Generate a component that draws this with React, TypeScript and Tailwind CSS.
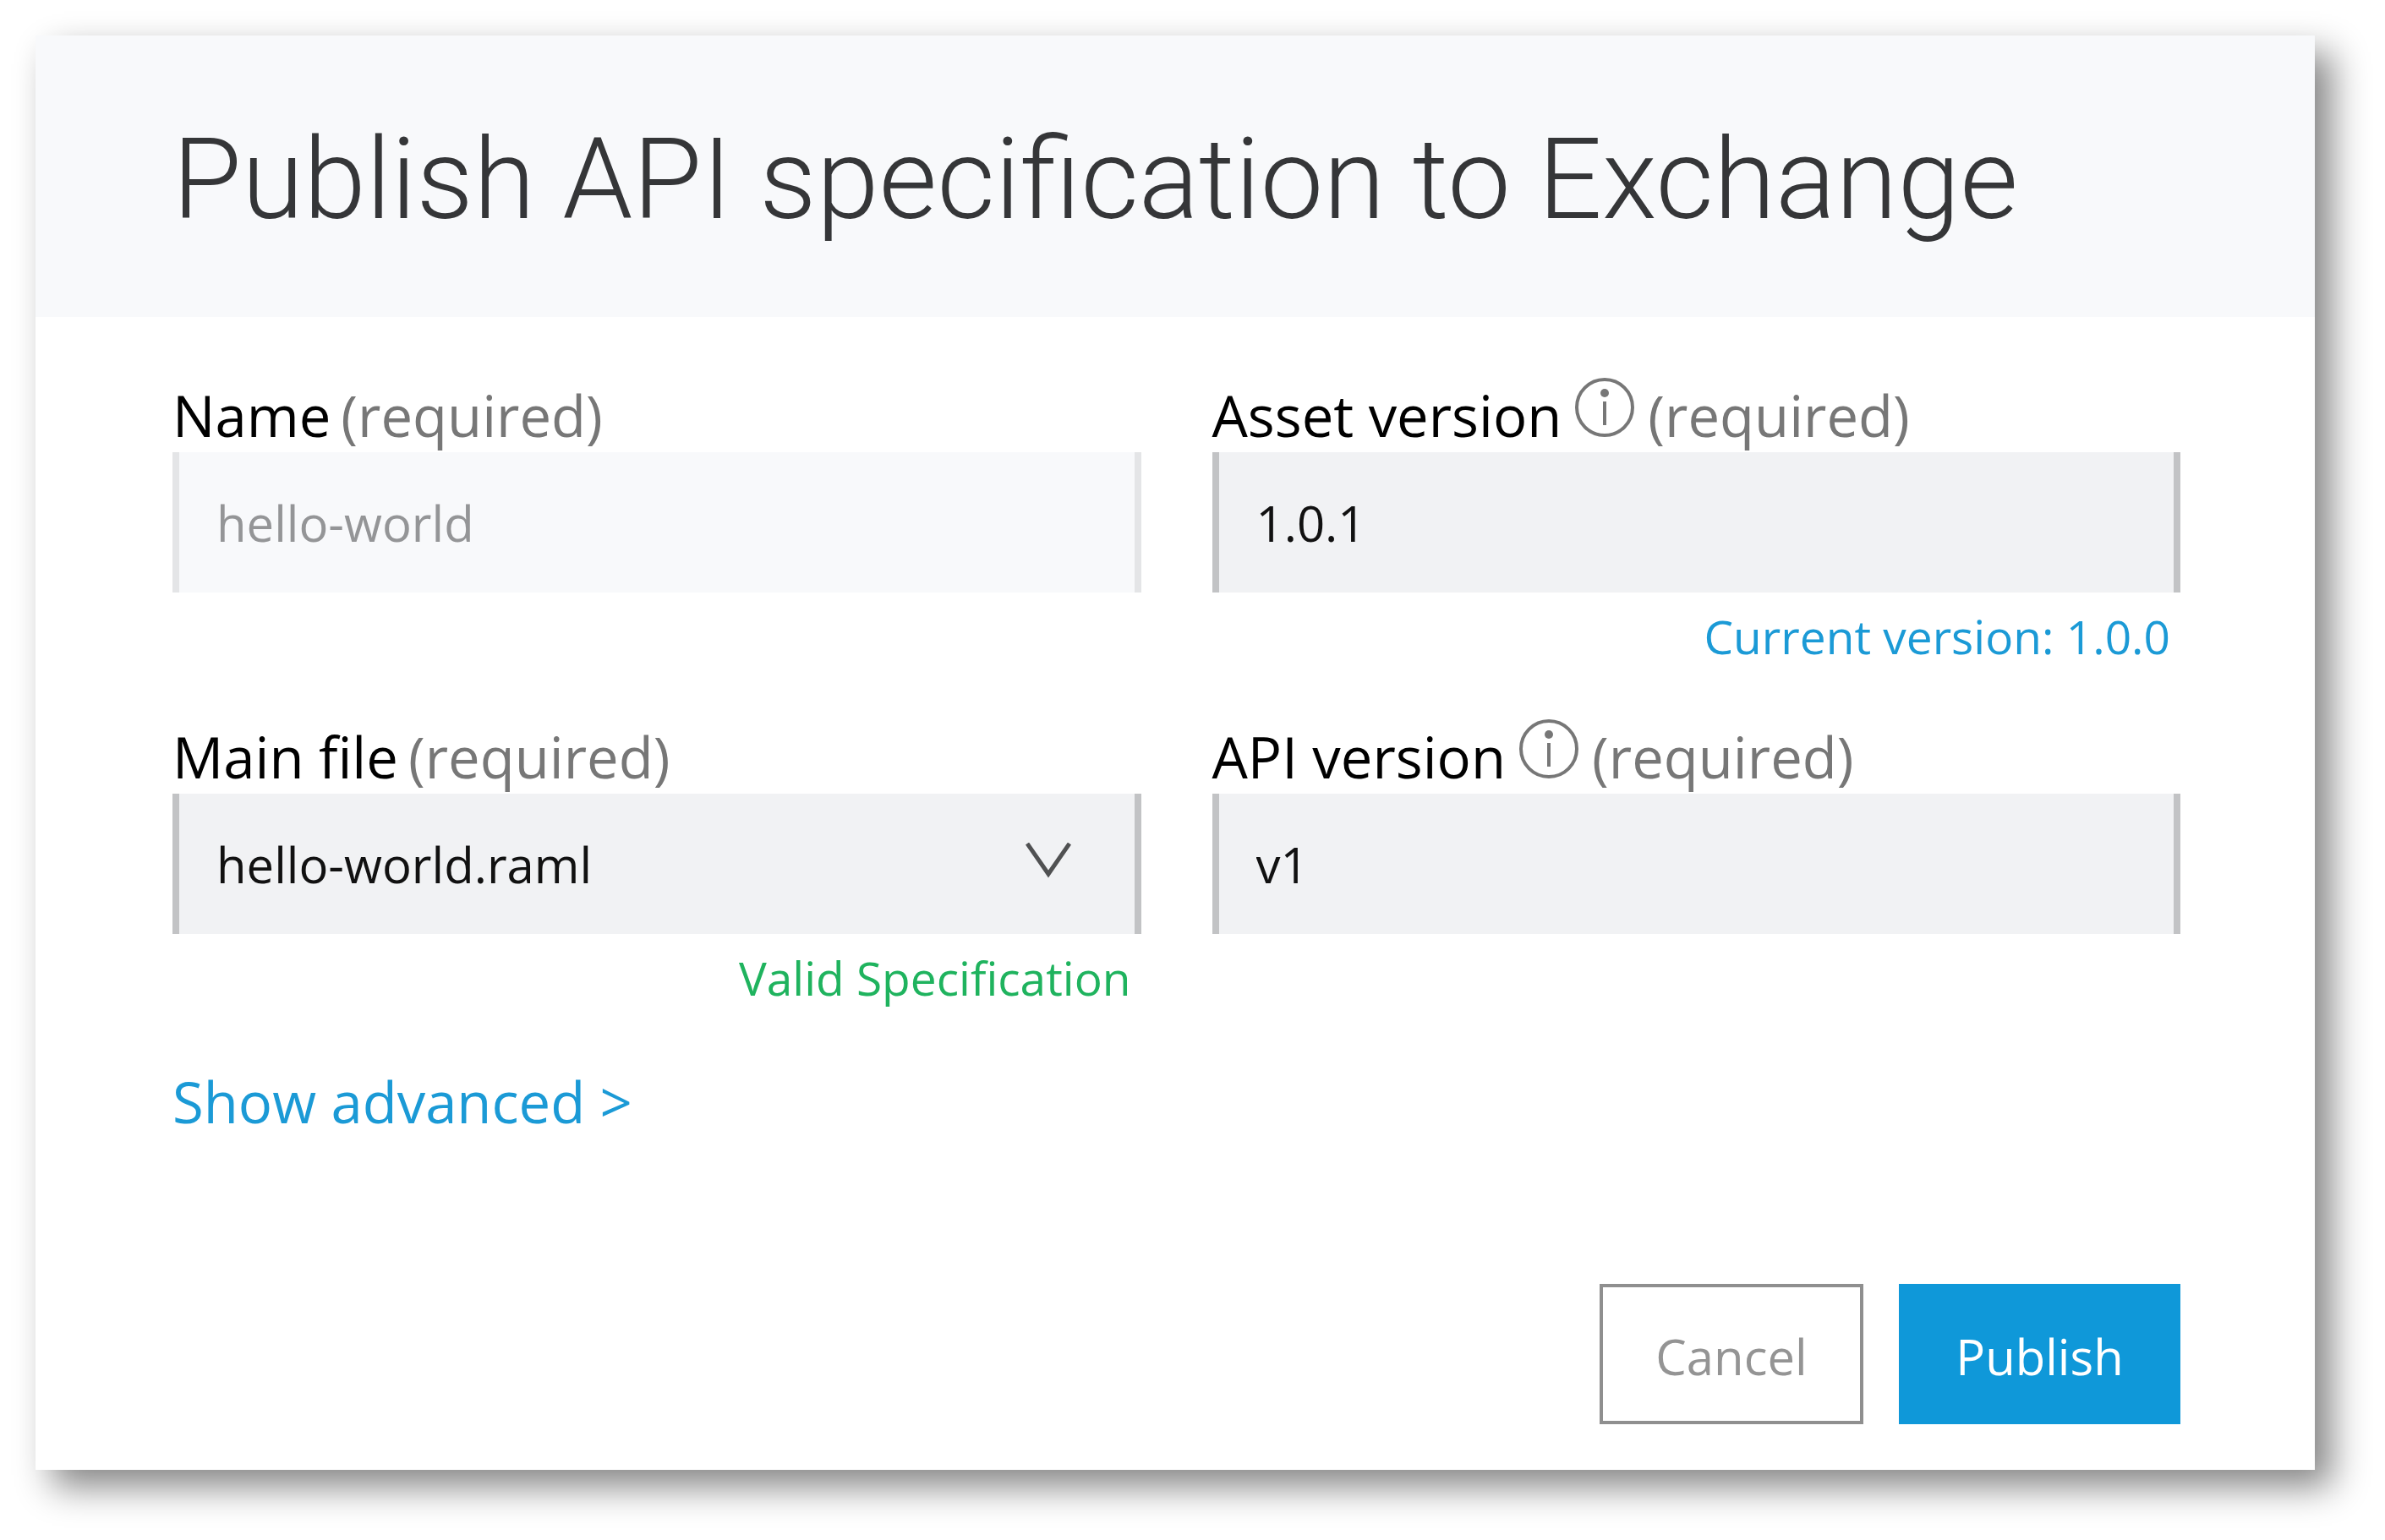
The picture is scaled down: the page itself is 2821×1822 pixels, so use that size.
import React from "react";

function InfoIcon() {
  return (
    <svg viewBox="0 0 70 70" role="img" aria-label="More information" className="mr-4 ml-4 size-[70px] shrink-0 text-[#777777]" fill="none" stroke="currentColor">
      <circle cx="35" cy="35" r="33" strokeWidth="4" />
      <circle cx="35" cy="18" r="5" fill="currentColor" stroke="none" />
      <path d="M35 28V56" strokeWidth="4" />
    </svg>
  );
}

function Chevron() {
  return (
    <svg viewBox="0 0 54 42" aria-hidden="true" className="pointer-events-none absolute top-[58px] right-[83px] h-[42px] w-[54px] text-[#505152]" fill="none" stroke="currentColor" strokeWidth="5">
      <path d="M2 1L27 37L52 1" />
    </svg>
  );
}

type FieldProps = {
  id: string;
  label: string;
  info?: boolean;
  note?: string;
  noteClass?: string;
  children: React.ReactNode;
};

function Field({ id, label, info, note, noteClass, children }: FieldProps) {
  return (
    <div className="flex min-w-0 flex-col">
      <label htmlFor={id} className="flex h-[88px] items-baseline text-[67px] leading-[88px] whitespace-nowrap text-black">
        <span>{label}</span>
        {info ? <InfoIcon /> : <span className="w-3" />}
        <span className="text-[#777777]">(required)</span>
      </label>
      {children}
      <p className={"h-[150px] pt-4 pr-3 text-right text-[55px] leading-[72px] " + (noteClass ?? "")}>{note}</p>
    </div>
  );
}

const control =
  "block h-[166px] w-full appearance-none rounded-none border-x-8 border-[#c2c3c5] bg-[#f1f2f4] px-11 text-[58px] text-[#111111] outline-none";

export default function App() {
  return (
    <main className="min-h-screen bg-white pt-[42px] pr-[83px] pb-[84px] pl-[42px] font-['Open_Sans',sans-serif]">
      <form className="bg-white shadow-[20px_20px_40px_rgba(0,0,0,0.48)]" onSubmit={(e) => e.preventDefault()}>
        <header className="flex h-[333px] items-center bg-[#f8f9fb] px-[162px] pt-2">
          <h1 className="font-['Roboto',sans-serif] text-[133px] leading-[160px] font-light whitespace-nowrap text-[#353638]">
            Publish API specification to Exchange
          </h1>
        </header>
        <div className="pt-[72px] pr-[159px] pb-[54px] pl-[162px]">
          <div className="grid grid-cols-2 gap-x-[84px]">
            <Field id="name" label="Name">
              <input id="name" disabled defaultValue="hello-world" className="block h-[166px] w-full rounded-none border-x-8 border-[#e4e5e7] bg-[#f8f9fb] px-11 text-[58px] text-[#949597]" />
            </Field>
            <Field id="asset-version" label="Asset version" info note="Current version: 1.0.0" noteClass="text-[#1b9ad6]">
              <input id="asset-version" defaultValue="1.0.1" className={control} />
            </Field>
            <Field id="main-file" label="Main file" note="Valid Specification" noteClass="text-[#1fb35e]">
              <div className="relative">
                <select id="main-file" className={control}>
                  <option>hello-world.raml</option>
                </select>
                <Chevron />
              </div>
            </Field>
            <Field id="api-version" label="API version" info>
              <input id="api-version" defaultValue="v1" className={control} />
            </Field>
          </div>
          <button type="button" className="mt-1 block text-[67px] leading-[88px] text-[#1b9ad6]">
            Show advanced &gt;
          </button>
          <div className="mt-[172px] flex justify-end gap-[42px]">
            <button type="button" className="h-[166px] w-[312px] border-4 border-[#8f8f8f] bg-white pt-1 text-[58px] text-[#949494]">
              Cancel
            </button>
            <button type="submit" className="h-[166px] w-[333px] bg-[#0f98d9] pt-1 text-[58px] font-medium text-white">
              Publish
            </button>
          </div>
        </div>
      </form>
    </main>
  );
}
